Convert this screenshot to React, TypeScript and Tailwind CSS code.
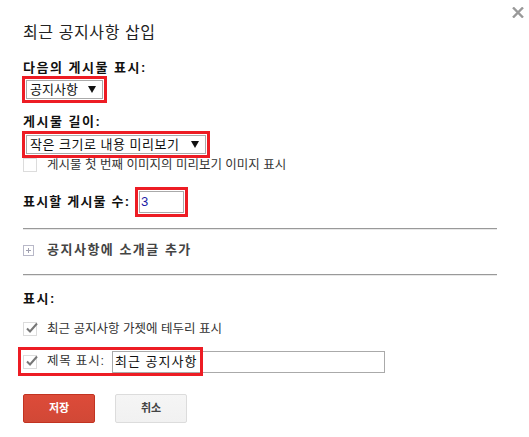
import React from "react";

const font = { fontFamily: '"Liberation Sans", "Noto Sans CJK KR", sans-serif' };

function Check({ checked }: { checked?: boolean }) {
  return (
    <span className="relative inline-block w-[14px] h-[14px] border border-[#dcdcdc] bg-white shrink-0">
      {checked && (
        <svg className="absolute left-[1px] top-[-2px]" width="14" height="14" viewBox="0 0 14 14">
          <path d="M2 7.5 L5 10.5 L12 2.5" fill="none" stroke="#777" strokeWidth="2" />
        </svg>
      )}
    </span>
  );
}

function Arrow() {
  return (
    <svg width="8" height="7" viewBox="0 0 8 7" className="shrink-0">
      <path d="M0 0 H8 L4 7 Z" fill="#111" />
    </svg>
  );
}

export default function App() {
  return (
    <div className="relative w-[529px] h-[437px] bg-white text-[#222] overflow-hidden" style={font}>
      <svg className="absolute left-[512px] top-[7px]" width="12" height="11" viewBox="0 0 12 11">
        <path d="M1 0.5 L11 10.5 M11 0.5 L1 10.5" stroke="#999" strokeWidth="2.4" />
      </svg>
      <div className="pl-[23px] pr-[32px] flex flex-col">
        <div className="mt-[23px] h-[20px] flex items-center text-[16px] tracking-[0.6px] text-[#222]">최근 공지사항 삽입</div>

        <div className="mt-[16px] h-[17px] flex items-center text-[13px] tracking-[1.5px] font-bold text-[#111]">다음의 게시물 표시:</div>
        <div className="-ml-[1px] w-[85px] h-[27px] border-[3px] border-[#ed1c24] p-[1px]">
          <div className="h-full border border-[#aaa] flex items-center pl-[3px] pr-[6px] justify-between text-[13px] text-[#111]">
            <span>공지사항</span>
            <Arrow />
          </div>
        </div>

        <div className="mt-[9px] h-[19px] flex items-center text-[13px] tracking-[1.5px] font-bold text-[#111]">게시물 길이:</div>
        <div className="-ml-[1px] w-[188px] h-[27px] border-[3px] border-[#ed1c24] p-[1px]">
          <div className="h-full border border-[#aaa] flex items-center pl-[3px] pr-[6px] justify-between text-[13px] tracking-[0.5px] text-[#111]">
            <span>작은 크기로 내용 미리보기</span>
            <Arrow />
          </div>
        </div>

        <div className="h-[14px] flex items-center gap-[10px] text-[12.5px] text-[#333]">
          <Check />
          <span>게시물 첫 번째 이미지의 미리보기 이미지 표시</span>
        </div>

        <div className="mt-[15px] h-[30px] flex items-center">
          <span className="text-[13px] tracking-[1.2px] font-bold text-[#111] w-[112px]">표시할 게시물 수:</span>
          <div className="w-[53px] h-[30px] border-[3px] border-[#ed1c24] p-[1px]">
            <div className="h-full border border-[#aaa] flex items-center pl-[1px] text-[13px] text-[#1a1aa6]">3</div>
          </div>
        </div>

        <div className="mt-[11px] h-[2px] border-t border-[#999] border-b border-b-[#e8e8e8]"></div>

        <div className="mt-[13px] h-[14px] flex items-center gap-[13px]">
          <span className="w-[11px] h-[11px] border border-[#b8b8c8] relative shrink-0">
            <span className="absolute left-[2px] top-[4px] w-[5px] h-[1px] bg-[#a0a0b0]"></span>
            <span className="absolute left-[4px] top-[2px] w-[1px] h-[5px] bg-[#a0a0b0]"></span>
          </span>
          <span className="text-[13px] tracking-[1.5px] font-bold text-[#444]">공지사항에 소개글 추가</span>
        </div>

        <div className="mt-[17px] h-[2px] border-t border-[#999] border-b border-b-[#e8e8e8]"></div>

        <div className="mt-[14px] h-[17px] flex items-center text-[13px] tracking-[1.5px] font-bold text-[#111]">표시:</div>

        <div className="mt-[15px] h-[14px] flex items-center gap-[10px] text-[12.5px] text-[#333]">
          <Check checked />
          <span>최근 공지사항 가젯에 테두리 표시</span>
        </div>

        <div className="mt-[11px] -ml-[5px] h-[29px] relative flex items-center">
          <div className="absolute left-0 top-0 w-[185px] h-[29px] border-[3px] border-[#ed1c24] pointer-events-none"></div>
          <div className="pl-[5px] flex items-center gap-[10px] text-[12.5px] text-[#333]">
            <Check checked />
            <span className="w-[64px] tracking-[0.8px]">제목 표시:</span>
          </div>
          <div className="ml-[1px] w-[273px] h-[22px] border border-[#aaa] flex items-center pl-[2px] text-[13px] tracking-[1px] text-[#111]">
            최근 공지사항
          </div>
        </div>

        <div className="mt-[18px] flex gap-[20px]">
          <button className="w-[72px] h-[29px] rounded-[2px] border border-[#c23321] bg-gradient-to-b from-[#dd4b39] to-[#d14836] text-white text-[11px] font-bold">저장</button>
          <button className="w-[72px] h-[29px] rounded-[2px] border border-[#dcdcdc] bg-gradient-to-b from-[#f5f5f5] to-[#f1f1f1] text-[#444] text-[11px] font-bold">취소</button>
        </div>
      </div>
    </div>
  );
}
